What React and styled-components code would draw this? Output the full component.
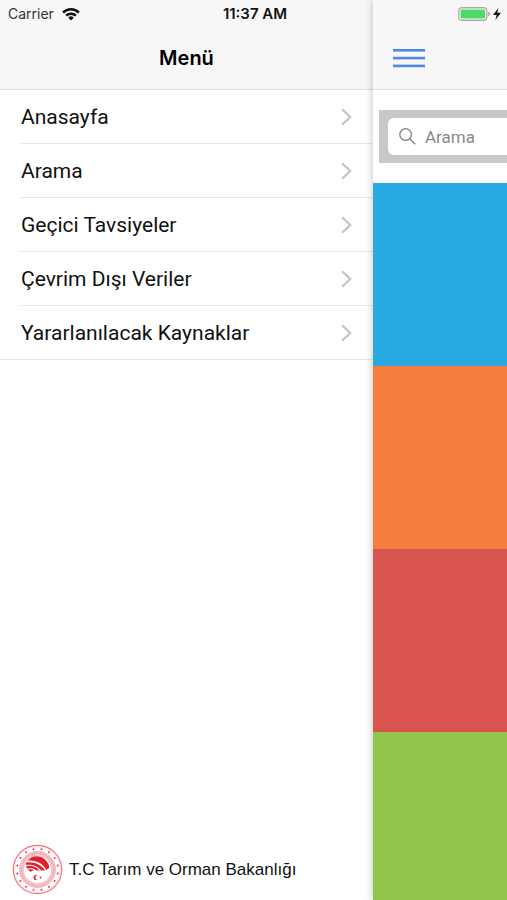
import { useState } from 'react';
import styled, { createGlobalStyle } from 'styled-components';

const GlobalStyle = createGlobalStyle`
  * {
    box-sizing: border-box;
  }
  body {
    margin: 0;
    background: #fff;
    color: #111;
    font-family: Roboto, 'Liberation Sans', sans-serif;
  }
`;

const Screen = styled.div`
  display: grid;
  grid-template-columns: minmax(0, 1fr) 134px;
  grid-template-rows: 28px minmax(0, 1fr);
  height: 100vh;
  overflow: hidden;
`;

const StatusBar = styled.div`
  grid-area: 1 / 1 / 2 / 3;
  z-index: 2;
  display: grid;
  grid-template-columns: 1fr auto 1fr;
  align-items: center;
  padding: 0 5px 0 8px;
  font-family: Inter, 'Liberation Sans', sans-serif;
  font-size: 14px;
  line-height: 16px;
`;

const StatusGroup = styled.div`
  display: flex;
  align-items: center;
  gap: 8px;
  color: #333;
  justify-content: ${({ $end }) => ($end ? 'flex-end' : 'flex-start')};
`;

const Time = styled.time`
  font-size: 15px;
  font-weight: 600;
  color: #111;
`;

const Drawer = styled.aside`
  grid-area: 1 / 1 / 3 / 2;
  display: flex;
  flex-direction: column;
  background: #fff;
`;

const Content = styled.main`
  grid-area: 1 / 2 / 3 / 3;
  z-index: 1;
  display: flex;
  flex-direction: column;
  min-height: 0;
  background: #fff;
  box-shadow: 0 0 8px rgba(0, 0, 0, 0.25);
`;

const Toolbar = styled.header`
  flex: none;
  display: flex;
  align-items: center;
  justify-content: ${({ $center }) => ($center ? 'center' : 'flex-start')};
  height: 90px;
  padding: 26px 20px 0;
  background: #f7f7f7;
  border-bottom: 1px solid #e0e0e0;
`;

const Title = styled.h1`
  margin: 0;
  font-family: Inter, 'Liberation Sans', sans-serif;
  font-size: 20px;
  line-height: 24px;
  font-weight: 600;
  color: #000;
`;

const MenuButton = styled.button`
  display: flex;
  padding: 0;
  border: none;
  background: none;
  cursor: pointer;
`;

const List = styled.ul`
  margin: 0;
  padding: 0;
  list-style: none;
  border-bottom: 1px solid #e8e8e8;
`;

const Item = styled.li`
  padding-left: 20px;
  &:last-child a {
    height: 53px;
    border-bottom: none;
  }
`;

const ItemLink = styled.a`
  display: flex;
  align-items: center;
  justify-content: space-between;
  height: 54px;
  padding: 0 21px 0 1px;
  border-bottom: 1px solid #e8e8e8;
  font-size: 21px;
  line-height: 24px;
  color: #111;
  text-decoration: none;
  white-space: nowrap;
`;

const Footer = styled.footer`
  display: flex;
  align-items: center;
  gap: 6px;
  margin-top: auto;
  padding: 0 12px 5px;
  font-family: 'Liberation Sans', sans-serif;
  font-size: 17px;
  line-height: 20px;
  white-space: nowrap;
`;

const SearchBar = styled.div`
  flex: none;
  margin: 20px 0 20px 6px;
  padding: 8px 0 8px 9px;
  background: #c8c8c8;
`;

const SearchField = styled.label`
  display: flex;
  align-items: center;
  gap: 9px;
  height: 37px;
  padding-left: 11px;
  border-radius: 6px 0 0 6px;
  background: #fff;
`;

const SearchInput = styled.input`
  flex: 1;
  min-width: 0;
  padding: 0;
  border: none;
  outline: none;
  background: none;
  font-family: inherit;
  font-size: 17px;
  line-height: 20px;
  color: #333;
  &::placeholder {
    color: #8a8a8a;
    opacity: 1;
  }
`;

const Tile = styled.section`
  flex: 0 0 183px;
  background: ${({ $color }) => $color};
  &:last-child {
    flex: 1 0 168px;
  }
`;

const menuItems = [
  'Anasayfa',
  'Arama',
  'Geçici Tavsiyeler',
  'Çevrim Dışı Veriler',
  'Yararlanılacak Kaynaklar',
];

const tileColors = ['#29a9e1', '#f47e3e', '#d9534f', '#94c54c'];

function WifiIcon() {
  return (
    <svg width="18" height="14" viewBox="0 0 18 14" fill="none" stroke="#111" strokeWidth="2.5">
      <path d="M1.1 5.6a11.2 11.2 0 0 1 15.8 0" />
      <path d="M4.1 8.7a7 7 0 0 1 9.8 0" />
      <path d="M9 13.400 6.300 10.700a3.800 3.800 0 0 1 5.400 0z" fill="#111" stroke="none" />
    </svg>
  );
}

function BatteryIcon() {
  return (
    <svg width="44" height="14" viewBox="0 0 44 14">
      <rect x="0.75" y="0.75" width="28" height="12.5" rx="3" fill="#fff" stroke="#a9a9a9" strokeWidth="1.3" />
      <rect x="2.5" y="2.5" width="24.5" height="9" rx="1.2" fill="#4cd964" />
      <path d="M30 4.8c1.6.3 1.900 1.200 1.900 2.200s-.3 1.900-1.900 2.200z" fill="#a9a9a9" />
      <path d="M40.500 1 35 8h3.700l-1.400 5 5.700-7.200h-3.700z" fill="#111" />
    </svg>
  );
}

function BurgerIcon() {
  return (
    <svg width="32" height="20" viewBox="0 0 32 20" fill="#5089ea">
      <rect y="1" width="32" height="2.6" />
      <rect y="8.8" width="32" height="2.6" />
      <rect y="16.6" width="32" height="2.6" />
    </svg>
  );
}

function ChevronIcon() {
  return (
    <svg width="11" height="18" viewBox="0 0 11 18" fill="none" stroke="#c4c4c6" strokeWidth="2.2">
      <path d="m1.2 1.2 8 7.8-8 7.8" />
    </svg>
  );
}

function SearchIcon() {
  return (
    <svg width="17" height="17" viewBox="0 0 17 17" fill="none" stroke="#858585" strokeWidth="1.4">
      <circle cx="6.6" cy="6.6" r="5.8" />
      <path d="m10.8 10.8 5.4 5.4" />
    </svg>
  );
}

function Emblem() {
  const stars = Array.from({ length: 16 }, (_, i) => (i + 0.5) * (Math.PI / 8));
  return (
    <svg width="51" height="51" viewBox="0 0 51 51" fill="none">
      <circle cx="25.5" cy="25.5" r="24.2" stroke="#ee7580" strokeWidth="1.2" />
      <circle cx="25.5" cy="25.5" r="22.8" stroke="#f9cdd1" strokeWidth="0.6" />
      {stars.map((a) => (
        <circle key={a} cx={25.5 + Math.cos(a) * 20.6} cy={25.5 + Math.sin(a) * 20.6} r="1" fill="#e63946" />
      ))}
      <circle cx="25.5" cy="25.5" r="16.2" stroke="#fadcdf" strokeWidth="4" />
      <circle cx="25.5" cy="25.5" r="18" stroke="#f2a0a8" strokeWidth="0.7" />
      <circle cx="25.5" cy="25.5" r="16.2" stroke="#f0a0a8" strokeWidth="2.4" strokeDasharray="1.3 0.7" />
      <circle cx="25.5" cy="25.5" r="14.2" stroke="#f2a0a8" strokeWidth="0.7" />
      {/* wheat fan: four leaves opening to the right */}
      <g fill="#e3202f">
        <path d="M15.500 16.500C20 11.500 28 10.800 32.500 15c2.800 2.600 4.500 5.500 4.900 8.700l-3 2.300C31 19.500 24.500 15.800 15.500 16.500z" />
        <path d="M14.300 18.300c8.300-.8 15 2.200 18.800 8.100l-3.900.1c-3.800-4.700-9-6.500-15.500-5.400z" />
        <path d="M13.700 22.200c5.800-1.100 10.600.4 14 4.300l-3.900-.3c-2.500-2-5.200-2.500-8.200-1.500z" />
        <path d="M16 25.600c2.300-.8 4.200-.5 6 .7l-3.700 1.500z" />
      </g>
      <path d="M25.600 31.200a2.700 2.700 0 1 0 0 4.600 2.100 2.100 0 1 1 0-4.600z" fill="#e3202f" />
      <circle cx="28.5" cy="33.5" r="0.9" fill="#e3202f" />
    </svg>
  );
}

export default function App() {
  const [query, setQuery] = useState('');

  return (
    <>
      <GlobalStyle />
      <Screen>
        <StatusBar>
          <StatusGroup>
            <span>Carrier</span>
            <WifiIcon />
          </StatusGroup>
          <Time>11:37 AM</Time>
          <StatusGroup $end>
            <BatteryIcon />
          </StatusGroup>
        </StatusBar>
        <Drawer>
          <Toolbar $center>
            <Title>Menü</Title>
          </Toolbar>
          <nav>
            <List>
              {menuItems.map((label) => (
                <Item key={label}>
                  <ItemLink href="#">
                    {label}
                    <ChevronIcon />
                  </ItemLink>
                </Item>
              ))}
            </List>
          </nav>
          <Footer>
            <Emblem />
            <span>T.C Tarım ve Orman Bakanlığı</span>
          </Footer>
        </Drawer>
        <Content>
          <Toolbar>
            <MenuButton type="button" aria-label="Menü">
              <BurgerIcon />
            </MenuButton>
          </Toolbar>
          <SearchBar>
            <SearchField>
              <SearchIcon />
              <SearchInput
                type="text"
                aria-label="Arama"
                placeholder="Arama"
                value={query}
                onChange={(e) => setQuery(e.target.value)}
              />
            </SearchField>
          </SearchBar>
          {tileColors.map((color) => (
            <Tile key={color} $color={color} />
          ))}
        </Content>
      </Screen>
    </>
  );
}
